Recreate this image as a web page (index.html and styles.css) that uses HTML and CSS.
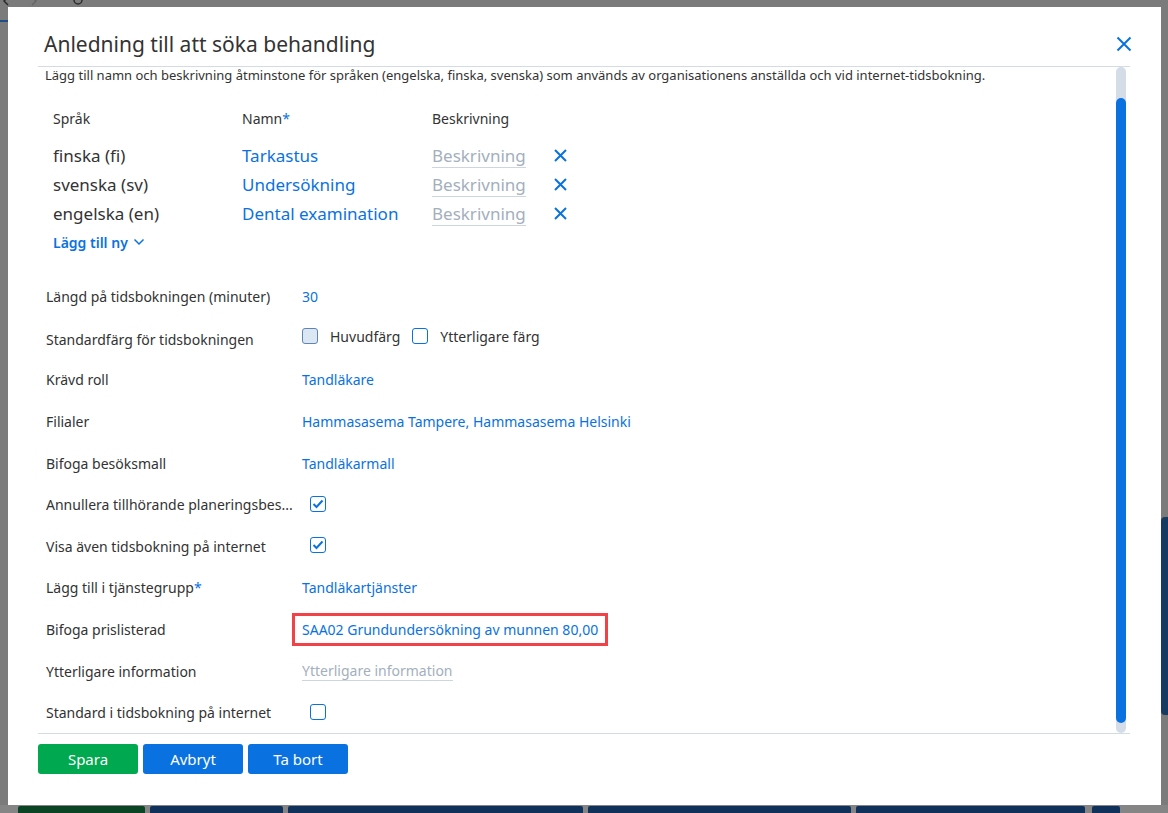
FILE: index.html
```html
<!DOCTYPE html>
<html lang="sv">
<head>
    <meta charset="UTF-8">
    <meta name="viewport" content="width=device-width, initial-scale=1.0">
    <title>Anledning till att söka behandling</title>
    <link rel="stylesheet" href="styles.css">
</head>
<body>
    <!-- Dimmed application behind the dialog -->
    <div class="app">
        <div class="app-top">
            <svg width="8" height="7" viewBox="0 0 8 7"><path d="M6 -3 L2 1 L6 5" stroke="#2b2b2b" stroke-width="1.5" fill="none"/></svg>
            <svg width="8" height="7" viewBox="0 0 8 7"><path d="M2 -3 L6 1 L2 5" stroke="#666666" stroke-width="1.5" fill="none"/></svg>
            <svg class="app-reload" width="12" height="7" viewBox="0 0 12 7"><path d="M2 0 A4 4 0 0 0 10 0" stroke="#2b2b2b" stroke-width="1.5" fill="none"/></svg>
        </div>
        <div class="app-middle">
            <div class="app-accent"></div>
            <div class="app-side"></div>
        </div>
        <div class="app-bottom">
            <span class="ghost ghost-green"></span>
            <span class="ghost ghost-w1"></span>
            <span class="ghost ghost-w2"></span>
            <span class="ghost ghost-w3"></span>
            <span class="ghost ghost-w4"></span>
            <span class="ghost ghost-w5"></span>
        </div>
    </div>

    <div class="modal">
        <div class="modal-header">
            <h1>Anledning till att söka behandling</h1>
            <button class="close-btn" aria-label="Stäng">
                <svg width="16" height="16" viewBox="0 0 16 16"><path d="M1.5 1.5 L14.5 14.5 M14.5 1.5 L1.5 14.5" stroke="currentColor" stroke-width="2" fill="none"/></svg>
            </button>
        </div>

        <div class="modal-body">
            <div class="modal-content">
                <p class="intro">Lägg till namn och beskrivning åtminstone för språken (engelska, finska, svenska) som används av organisationens anställda och vid internet-tidsbokning.</p>

                <div class="lang-table">
                    <div class="lang-head">
                        <span class="col-lang">Språk</span>
                        <span class="col-name">Namn<em class="req">*</em></span>
                        <span class="col-desc">Beskrivning</span>
                    </div>
                    <div class="lang-row">
                        <span class="col-lang">finska (fi)</span>
                        <span class="col-name link">Tarkastus</span>
                        <span class="col-desc"><span class="placeholder">Beskrivning</span></span>
                        <span class="remove"><svg width="13" height="13" viewBox="0 0 13 13"><path d="M1 1 L12 12 M12 1 L1 12" stroke="currentColor" stroke-width="2" fill="none"/></svg></span>
                    </div>
                    <div class="lang-row">
                        <span class="col-lang">svenska (sv)</span>
                        <span class="col-name link">Undersökning</span>
                        <span class="col-desc"><span class="placeholder">Beskrivning</span></span>
                        <span class="remove"><svg width="13" height="13" viewBox="0 0 13 13"><path d="M1 1 L12 12 M12 1 L1 12" stroke="currentColor" stroke-width="2" fill="none"/></svg></span>
                    </div>
                    <div class="lang-row">
                        <span class="col-lang">engelska (en)</span>
                        <span class="col-name link">Dental examination</span>
                        <span class="col-desc"><span class="placeholder">Beskrivning</span></span>
                        <span class="remove"><svg width="13" height="13" viewBox="0 0 13 13"><path d="M1 1 L12 12 M12 1 L1 12" stroke="currentColor" stroke-width="2" fill="none"/></svg></span>
                    </div>
                </div>

                <div class="add-new">
                    Lägg till ny
                    <svg width="12" height="8" viewBox="0 0 12 8"><path d="M1.5 1.5 L6 6 L10.5 1.5" stroke="currentColor" stroke-width="1.5" fill="none"/></svg>
                </div>

                <div class="form">
                    <div class="form-row">
                        <div class="form-label">Längd på tidsbokningen (minuter)</div>
                        <div class="form-value link">30</div>
                    </div>
                    <div class="form-row">
                        <div class="form-label label-low">Standardfärg för tidsbokningen</div>
                        <div class="form-value color-choice">
                            <span class="checkbox checkbox-tinted"></span>
                            <span>Huvudfärg</span>
                            <span class="checkbox"></span>
                            <span>Ytterligare färg</span>
                        </div>
                    </div>
                    <div class="form-row">
                        <div class="form-label">Krävd roll</div>
                        <div class="form-value link">Tandläkare</div>
                    </div>
                    <div class="form-row">
                        <div class="form-label">Filialer</div>
                        <div class="form-value link">Hammasasema Tampere, Hammasasema Helsinki</div>
                    </div>
                    <div class="form-row">
                        <div class="form-label">Bifoga besöksmall</div>
                        <div class="form-value link">Tandläkarmall</div>
                    </div>
                    <div class="form-row">
                        <div class="form-label" title="Annullera tillhörande planeringsbesök">Annullera tillhörande planeringsbes...</div>
                        <div class="form-value">
                            <span class="checkbox checkbox-bool"><svg width="12" height="10" viewBox="0 0 12 10"><path d="M1.5 5 L4.5 8 L10.5 1.5" stroke="currentColor" stroke-width="2" fill="none"/></svg></span>
                        </div>
                    </div>
                    <div class="form-row">
                        <div class="form-label">Visa även tidsbokning på internet</div>
                        <div class="form-value">
                            <span class="checkbox checkbox-bool"><svg width="12" height="10" viewBox="0 0 12 10"><path d="M1.5 5 L4.5 8 L10.5 1.5" stroke="currentColor" stroke-width="2" fill="none"/></svg></span>
                        </div>
                    </div>
                    <div class="form-row">
                        <div class="form-label">Lägg till i tjänstegrupp<em class="req">*</em></div>
                        <div class="form-value link">Tandläkartjänster</div>
                    </div>
                    <div class="form-row">
                        <div class="form-label">Bifoga prislisterad</div>
                        <div class="form-value">
                            <span class="highlight link">SAA02 Grundundersökning av munnen 80,00</span>
                        </div>
                    </div>
                    <div class="form-row">
                        <div class="form-label">Ytterligare information</div>
                        <div class="form-value"><span class="placeholder">Ytterligare information</span></div>
                    </div>
                    <div class="form-row">
                        <div class="form-label">Standard i tidsbokning på internet</div>
                        <div class="form-value">
                            <span class="checkbox checkbox-bool"></span>
                        </div>
                    </div>
                </div>
            </div>
            <div class="scrollbar"><div class="scroll-thumb"></div></div>
        </div>

        <div class="modal-footer">
            <button class="btn btn-save">Spara</button>
            <button class="btn">Avbryt</button>
            <button class="btn">Ta bort</button>
        </div>
    </div>
</body>
</html>
```

FILE: styles.css
```css
/* General */
body {
    margin: 0;
    font-family: "Noto Sans", "Open Sans", sans-serif;
    color: #333333;
    background-color: #7b7b7b;
    overflow: hidden;
}

.link {
    color: #0a72e0;
}

.req {
    font-style: normal;
    color: #0a72e0;
}

/* Background app (dimmed) */
.app {
    height: 813px;
    display: flex;
    flex-direction: column;
}

.app-top {
    height: 7px;
    display: flex;
    gap: 20px;
    padding-left: 2px;
    overflow: hidden;
}

.app-reload {
    margin-left: 14px;
}

.app-middle {
    flex: 1;
    display: flex;
    justify-content: space-between;
}

.app-accent {
    width: 8px;
    height: 2px;
    margin-top: 13px;
    background-color: #1d4f86;
}

.app-side {
    width: 7px;
    height: 198px;
    margin-top: 510px;
    border-radius: 4px 0 0 4px;
    background-color: #173a63;
}

.app-bottom {
    height: 8px;
    display: flex;
    align-items: flex-end;
    gap: 5px;
    padding-left: 18px;
    background-color: #858585;
}

.ghost {
    height: 7px;
    border-radius: 2px 2px 0 0;
    background-color: #10325a;
}

.ghost-green { width: 127px; background-color: #0b4424; }
.ghost-w1 { width: 133px; }
.ghost-w2 { width: 295px; }
.ghost-w3 { width: 263px; }
.ghost-w4 { width: 229px; }
.ghost-w5 { width: 28px; margin-left: 2px; }

/* Dialog */
.modal {
    position: absolute;
    left: 8px;
    top: 7px;
    width: 1153px;
    height: 798px;
    box-sizing: border-box;
    padding: 0 31px 0 30px;
    background-color: #ffffff;
    display: flex;
    flex-direction: column;
}

.modal-header {
    display: flex;
    align-items: flex-start;
    justify-content: space-between;
    padding: 22px 0 7px 6px;
    border-bottom: 1px solid #d3dbe4;
}

.modal-header h1 {
    margin: 0;
    font-size: 21px;
    line-height: 30px;
    font-weight: 400;
    color: #333333;
}

.close-btn {
    border: none;
    background: none;
    padding: 0;
    margin: 7px -2px 0 0;
    color: #0a72e0;
    display: flex;
}

.modal-body {
    height: 666px;
    display: flex;
    overflow: hidden;
}

.modal-content {
    flex: 1;
}

.intro {
    margin: 0;
    padding-left: 7px;
    font-size: 13px;
    line-height: 16px;
    color: #333333;
}

/* Languages */
.lang-table {
    margin-top: 25px;
    padding-left: 14px;
}

.lang-head, .lang-row {
    display: flex;
    align-items: center;
}

.lang-head {
    height: 20px;
    font-size: 14px;
}

.lang-row {
    height: 29px;
    font-size: 17px;
}

.lang-head + .lang-row {
    margin-top: 13px;
}

.col-lang, .col-name {
    width: 190px;
}

.col-lang {
    padding-left: 1px;
    box-sizing: border-box;
}

.col-desc {
    width: 122px;
}

.placeholder {
    color: #a3afbd;
    border-bottom: 1px solid #cdd5de;
}

.remove {
    display: flex;
    color: #0a72e0;
}

.add-new {
    margin-top: 4px;
    padding-left: 15px;
    height: 20px;
    display: flex;
    align-items: center;
    gap: 5px;
    font-size: 14px;
    font-weight: 600;
    color: #0a72e0;
}

/* Form rows */
.form {
    margin-top: 24px;
}

.form-row {
    height: 41.6px;
    display: flex;
    align-items: center;
    font-size: 14px;
}

.form-label {
    width: 264px;
    box-sizing: border-box;
    padding: 0 10px 0 8px;
    white-space: nowrap;
}

.label-low {
    padding-top: 2px;
}

.form-value {
    display: flex;
    align-items: center;
}

.color-choice {
    gap: 12px;
    margin-top: -4px;
}

.checkbox {
    width: 14px;
    height: 14px;
    border: 1.5px solid #0a72e0;
    border-radius: 3px;
    display: flex;
    align-items: center;
    justify-content: center;
    color: #0a72e0;
}

.checkbox-tinted {
    background-color: #dbe8f3;
    border-color: #5f86b0;
}

.checkbox-bool {
    margin-left: 8px;
    margin-top: -2px;
}

.highlight {
    margin-left: -10px;
    margin-top: -1px;
    padding: 4px 7px;
    border: 3px solid #f14347;
}

/* Fake scrollbar */
.scrollbar {
    width: 10px;
    margin: 0 4px 0 4px;
    border-radius: 5px;
    background-color: #d3dce7;
    display: flex;
    flex-direction: column;
    padding: 31px 0 10px;
    box-sizing: border-box;
}

.scroll-thumb {
    flex: 1;
    border-radius: 5px;
    background-color: #0a72e0;
}

/* Footer */
.modal-footer {
    border-top: 1px solid #d3dbe4;
    padding-top: 10px;
    display: flex;
    gap: 5px;
}

.btn {
    width: 100px;
    height: 30px;
    border: none;
    border-radius: 3px;
    background-color: #0a72e0;
    color: #ffffff;
    font-family: inherit;
    font-size: 15px;
    cursor: pointer;
}

.btn-save {
    background-color: #00a84f;
}
```
